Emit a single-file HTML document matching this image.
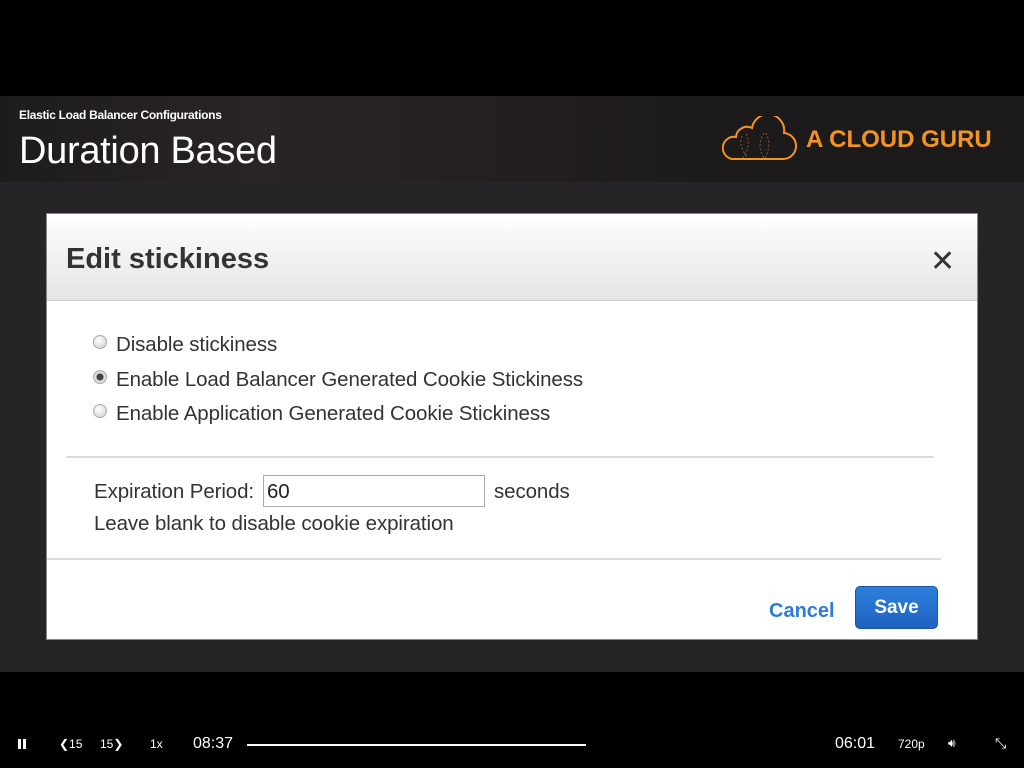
<!DOCTYPE html>
<html><head><meta charset="utf-8"><style>
*{margin:0;padding:0;box-sizing:border-box}
body{width:1024px;height:768px;background:#000;position:relative;overflow:hidden;font-family:"Liberation Sans",Arial,sans-serif}
.abs{position:absolute}
#hdr{left:0;top:96px;width:1024px;height:86px;background:linear-gradient(90deg,#1d1b1c 0%,#2a2524 25%,#252020 45%,#1c1a1b 70%,#1b1919 100%)}
#stage{left:0;top:182px;width:1024px;height:490px;background:#262426}
#dlg{left:46px;top:213px;width:932px;height:427px;background:#fff;border:1px solid #888}
#dh{left:0;top:0;width:930px;height:87px;background:linear-gradient(#fff,#e4e4e4);border-bottom:1px solid #ccc}
.t{color:#333;font-size:20.5px;white-space:nowrap;letter-spacing:-0.1px}
.radio{width:14px;height:14px;border-radius:50%;border:1px solid #aaa;background:radial-gradient(circle at 40% 35%,#fff,#ccc)}
.ctl{color:#fff;font-size:13px;white-space:nowrap}
</style></head><body>
<div id="hdr" class="abs"></div>
<div class="abs" style="left:19px;top:108px;color:#fff;font-size:12px;font-weight:bold;letter-spacing:-0.3px">Elastic Load Balancer Configurations</div>
<div class="abs" style="left:19px;top:130px;color:#fff;font-size:38px;letter-spacing:-0.3px">Duration Based</div>
<svg class="abs" style="left:722px;top:116px" width="80" height="46" viewBox="0 0 80 46">
<path d="M10 43 H60 A13 13 0 0 0 62 17 A16 16 0 0 0 30 12 A11 11 0 0 0 14 21 A11 11 0 0 0 10 43Z" fill="none" stroke="#f39324" stroke-width="2"/>
<path d="M20 20 q-4 10 6 22 M24 18 q6 10 -3 24 M42 17 q-8 12 0 25 M44 17 q6 12 -1 25" fill="none" stroke="#8a5a2a" stroke-width="1" stroke-dasharray="2 2"/>
</svg>
<div class="abs" style="left:806px;top:126px;color:#f39324;font-size:24px;font-weight:bold">A CLOUD GURU</div>
<div id="stage" class="abs"></div>
<div id="dlg" class="abs">
 <div id="dh" class="abs"></div>
 <div class="abs" style="left:19px;top:29px;font-size:29px;font-weight:bold;color:#333">Edit stickiness</div>
 <div class="abs" style="left:883px;top:30px;font-size:30px;color:#333">✕</div>
 <div class="abs radio" style="left:46px;top:121px"></div>
 <div class="abs t" style="left:69px;top:119px">Disable stickiness</div>
 <div class="abs radio" style="left:46px;top:156px;background:radial-gradient(circle,#444 0 3px,#ddd 4px)"></div>
 <div class="abs t" style="left:69px;top:154px">Enable Load Balancer Generated Cookie Stickiness</div>
 <div class="abs radio" style="left:46px;top:190px"></div>
 <div class="abs t" style="left:69px;top:188px">Enable Application Generated Cookie Stickiness</div>
 <div class="abs" style="left:19px;top:242px;width:868px;height:2px;background:#ddd"></div>
 <div class="abs t" style="left:47px;top:266px">Expiration Period:</div>
 <div class="abs" style="left:216px;top:261px;width:222px;height:32px;border:1px solid #aaa"></div>
 <div class="abs t" style="left:220px;top:266px;color:#222">60</div>
 <div class="abs t" style="left:447px;top:266px">seconds</div>
 <div class="abs t" style="left:47px;top:298px">Leave blank to disable cookie expiration</div>
 <div class="abs" style="left:0;top:344px;width:894px;height:2px;background:#ddd"></div>
 <div class="abs" style="left:722px;top:386px;font-size:20px;font-weight:bold;color:#2f7bd8">Cancel</div>
 <div class="abs" style="left:808px;top:372px;width:83px;height:43px;border-radius:5px;background:linear-gradient(#2d7fdc,#1f62c0);border:1px solid #1a55a8;color:#fff;font-size:19px;font-weight:bold;text-align:center;line-height:41px">Save</div>
</div>
<div class="abs" style="left:18px;top:739px;width:3px;height:10px;background:#fff"></div>
<div class="abs" style="left:23px;top:739px;width:3px;height:10px;background:#fff"></div>
<div class="abs ctl" style="left:59px;top:737px;font-size:12px">❮15</div>
<div class="abs ctl" style="left:100px;top:737px;font-size:12px">15❯</div>
<div class="abs ctl" style="left:150px;top:737px;font-size:12px">1x</div>
<div class="abs ctl" style="left:193px;top:735px;font-size:16px">08:37</div>
<div class="abs" style="left:247px;top:744px;width:339px;height:2px;background:#fff"></div>
<div class="abs ctl" style="left:835px;top:735px;font-size:16px">06:01</div>
<div class="abs ctl" style="left:898px;top:737px;font-size:12px">720p</div>
<div class="abs ctl" style="left:948px;top:736px;font-size:12px">🔊︎</div>
<div class="abs ctl" style="left:995px;top:735px;font-size:14px">⤡</div>
</body></html>
